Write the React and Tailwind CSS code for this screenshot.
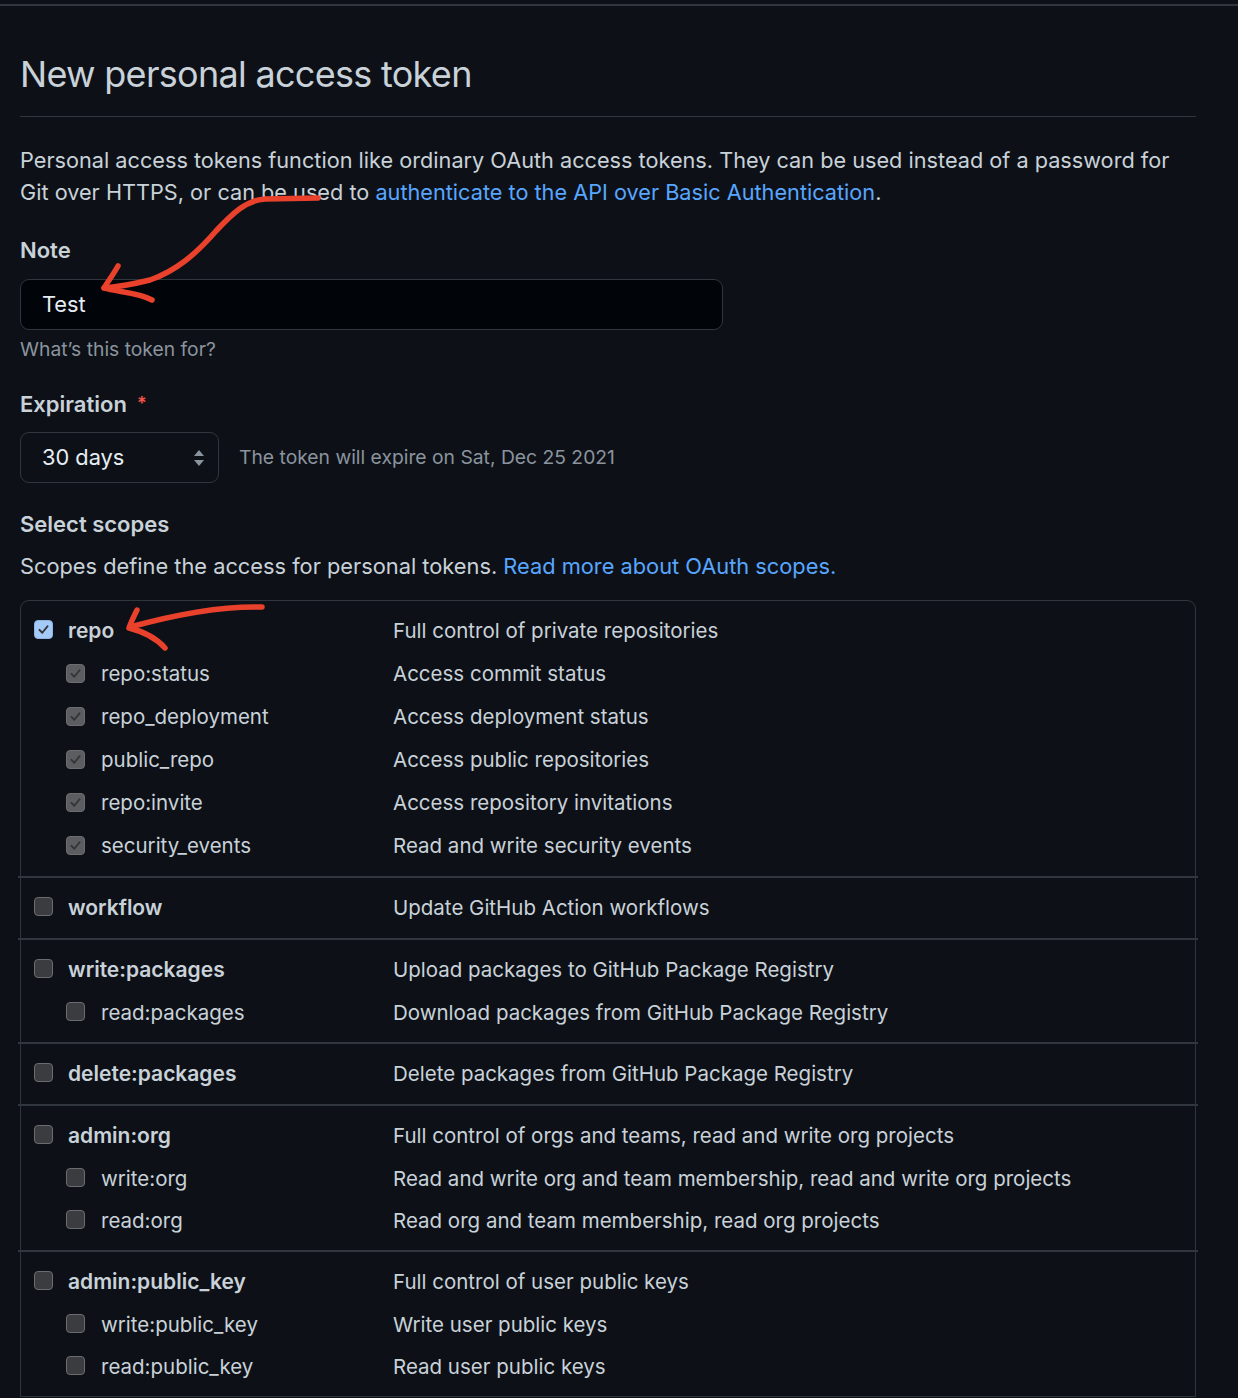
import React from "react";

const groups = [
  {
    name: "repo",
    desc: "Full control of private repositories",
    checked: true,
    children: [
      ["repo:status", "Access commit status"],
      ["repo_deployment", "Access deployment status"],
      ["public_repo", "Access public repositories"],
      ["repo:invite", "Access repository invitations"],
      ["security_events", "Read and write security events"],
    ],
  },
  { name: "workflow", desc: "Update GitHub Action workflows", children: [] },
  {
    name: "write:packages",
    desc: "Upload packages to GitHub Package Registry",
    children: [["read:packages", "Download packages from GitHub Package Registry"]],
  },
  { name: "delete:packages", desc: "Delete packages from GitHub Package Registry", children: [] },
  {
    name: "admin:org",
    desc: "Full control of orgs and teams, read and write org projects",
    children: [
      ["write:org", "Read and write org and team membership, read and write org projects"],
      ["read:org", "Read org and team membership, read org projects"],
    ],
  },
  {
    name: "admin:public_key",
    desc: "Full control of user public keys",
    children: [
      ["write:public_key", "Write user public keys"],
      ["read:public_key", "Read user public keys"],
    ],
  },
];

// state: on (blue), sub (greyed, checked), off
const Checkbox = ({ state }) => {
  const box =
    state === "on"
      ? "bg-[#a4cbf8] border-[#8db4e2]"
      : state === "sub"
      ? "bg-[#5c5d60] border-[#6c6d70]"
      : "bg-[#3b3c3f] border-[#6b6c6f]";
  return (
    <span className={`flex w-[19px] h-[19px] shrink-0 items-center justify-center rounded-[4px] border ${box} -mt-[3px]`}>
      {state !== "off" && (
        <svg width="13" height="13" viewBox="0 0 16 16">
          <path d="M3 8.5 L6.5 12 L13 4" fill="none" stroke="#333538" strokeWidth="2.4" strokeLinecap="round" strokeLinejoin="round" />
        </svg>
      )}
    </span>
  );
};

const Row = ({ name, desc, state, sub, tall }) => (
  <div className={`grid grid-cols-[372px_1fr] items-center text-[20.5px] ${sub ? (tall ? "h-[43px]" : "h-[42px]") : "h-[44px]"}`}>
    <div className={sub ? "flex items-center pl-[45px] gap-[16px]" : "flex items-center pl-[13px] gap-[15px] font-semibold text-[21px]"}>
      <Checkbox state={state} />
      <span>{name}</span>
    </div>
    <span>{desc}</span>
  </div>
);

const Arrows = () => (
  <svg className="absolute left-0 top-0 pointer-events-none" width="400" height="700" viewBox="0 0 400 700">
    <g fill="none" stroke="#e9412b" strokeWidth="5.5" strokeLinecap="round" strokeLinejoin="round">
      {/* note arrow */}
      <path d="M318 198 L265 199 C246 200 232 214 216 231 C196 254 176 271 150 280 C130 285 116 287 104 288" />
      <path d="M118 266 C113 275 107 283 104 288 C116 292 138 292 152 300" />
      {/* repo arrow */}
      <path d="M262 607 C228 606 188 611 130 627" />
      <path d="M137 610 C134 616 131 622 129 628 C145 632 158 640 165 648" />
    </g>
  </svg>
);

export default function App() {
  return (
    <div className="relative min-h-[1398px] overflow-hidden bg-[#0d1117] text-[#c9d1d9] font-[Inter,sans-serif]">
      <div className="h-[4px]" />
      <div className="h-[2px] bg-[#30363d]" />

      <div className="ml-[20px] w-[1176px]">
        {/* heading */}
        <div className="mt-[46px] border-b border-[#30363d] pb-[19px]">
          <h1 className="text-[36px] leading-[45px] font-normal tracking-[-0.7px] text-[#c9d1d9]">New personal access token</h1>
        </div>

        <div className="mt-[27px] text-[21.7px] leading-[32px]">
          <div>Personal access tokens function like ordinary OAuth access tokens. They can be used instead of a password for</div>
          <div>
            Git over HTTPS, or can be used to <span className="text-[#58a6ff]">authenticate to the API over Basic Authentication</span>.
          </div>
        </div>

        {/* note */}
        <div className="mt-[26px] text-[22px] leading-[32px] font-semibold">Note</div>
        <div className="mt-[13px] flex items-center w-[703px] h-[51px] rounded-[9px] border border-[#30363d] bg-[#010409] pl-[21px] text-[21.8px] text-[#e6edf3]">
          Test
        </div>
        <div className="mt-[6px] text-[19.3px] leading-[27px] text-[#8b949e]">What’s this token for?</div>

        {/* expiration */}
        <div className="mt-[25px] flex items-center gap-[10px] text-[22px] leading-[32px] font-semibold">
          Expiration <span className="text-[#f85149] text-[18px]">*</span>
        </div>
        <div className="mt-[12px] flex items-center gap-[20px]">
          <div className="flex items-center justify-between w-[199px] h-[51px] rounded-[9px] border border-[#30363d] bg-[#0d1117] pl-[21px] pr-[13px] text-[21.8px] text-[#e6edf3]">
            30 days
            <svg width="12" height="18" viewBox="0 0 12 18">
              <path d="M6 1 L11 7 L1 7 Z" fill="#8b949e" />
              <path d="M6 17 L11 11 L1 11 Z" fill="#8b949e" />
            </svg>
          </div>
          <span className="text-[19.3px] text-[#8b949e]">The token will expire on Sat, Dec 25 2021</span>
        </div>

        {/* scopes */}
        <div className="mt-[25px] text-[22px] leading-[32px] font-semibold">Select scopes</div>
        <p className="mt-[10px] text-[21.8px] leading-[32px]">
          Scopes define the access for personal tokens. <span className="text-[#58a6ff]">Read more about OAuth scopes.</span>
        </p>

        <div className="mt-[18px] rounded-t-[9px] border border-[#30363d]">
          {groups.map((g, i) => (
            <div key={g.name}>
              {i > 0 && <div className="h-[2px] bg-[#30363d] -mx-[3px]" />}
              <div className="py-[8px]">
                <Row name={g.name} desc={g.desc} state={g.checked ? "on" : "off"} />
                {g.children.map(([n, d]) => (
                  <Row key={n} name={n} desc={d} state={g.checked ? "sub" : "off"} sub tall={g.checked} />
                ))}
              </div>
            </div>
          ))}
        </div>
      </div>

      <Arrows />
    </div>
  );
}
